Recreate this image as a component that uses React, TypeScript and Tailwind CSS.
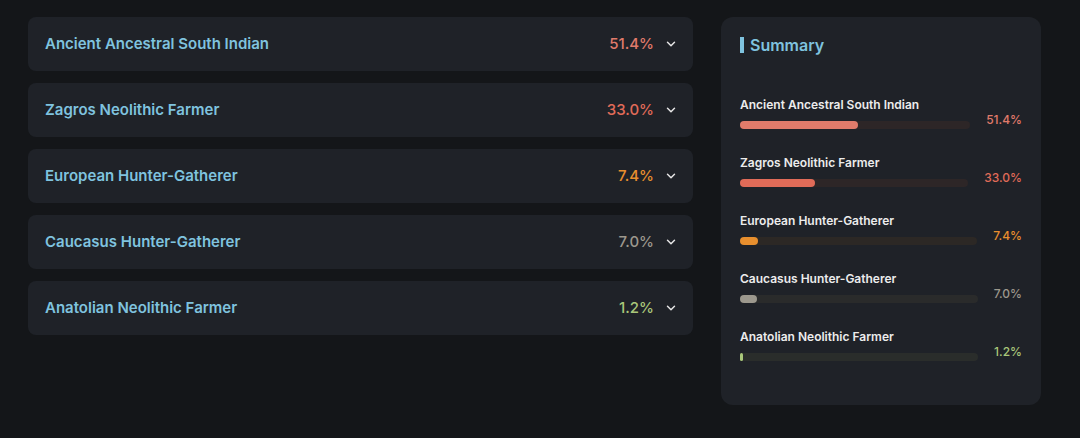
import { ChevronDown } from 'lucide-react';

interface Component {
  name: string;
  value: number;
  color: string;
  track: string;
}

const components: Component[] = [
  { name: 'Ancient Ancestral South Indian', value: 51.4, color: '#e07b6b', track: '#2d2627' },
  { name: 'Zagros Neolithic Farmer', value: 33.0, color: '#e06b58', track: '#2d2627' },
  { name: 'European Hunter-Gatherer', value: 7.4, color: '#e88f2e', track: '#2c2825' },
  { name: 'Caucasus Hunter-Gatherer', value: 7.0, color: '#9c988d', track: '#2a2b2b' },
  { name: 'Anatolian Neolithic Farmer', value: 1.2, color: '#a9c77a', track: '#2a2d2b' },
];

function ComponentRow({ item }: { item: Component }) {
  return (
    <div className="flex h-[54px] items-center justify-between rounded-lg bg-[#1f2228] pl-[17px] pr-[15px]">
      <span className="text-[15px] font-semibold text-[#7fc3df]">{item.name}</span>
      <div className="flex items-center gap-[10px]">
        <span className="text-[15px] font-medium" style={{ color: item.color }}>
          {item.value.toFixed(1)}%
        </span>
        <ChevronDown size={14} strokeWidth={2.5} className="text-[#e6e6e6]" />
      </div>
    </div>
  );
}

function SummaryItem({ item }: { item: Component }) {
  return (
    <div className="flex items-end gap-4">
      <div className="flex-1">
        <div className="text-[12px] font-semibold leading-4 text-[#ececec]">{item.name}</div>
        <div className="mt-2 h-2 w-full rounded-full" style={{ background: item.track }}>
          <div
            className="h-2 rounded-full"
            style={{ width: `${Math.max(item.value, 1.2)}%`, background: item.color }}
          />
        </div>
      </div>
      <span className="mb-[1px] text-[12px] font-medium leading-4" style={{ color: item.color }}>
        {item.value.toFixed(1)}%
      </span>
    </div>
  );
}

export default function App() {
  return (
    <div
      className="flex min-h-[438px] items-start gap-[28px] bg-[#141619] pl-[28px] pt-[17px]"
      style={{ fontFamily: 'Inter, "Open Sans", sans-serif' }}
    >
      {/* Expandable rows */}
      <div className="flex w-[665px] flex-col gap-[12px]">
        {components.map((c) => (
          <ComponentRow key={c.name} item={c} />
        ))}
      </div>

      {/* Summary panel */}
      <div className="w-[320px] rounded-xl bg-[#1f2228] px-[19px] pb-[44px] pt-[20px]">
        <h3 className="flex items-center gap-[6px] text-[16px] font-semibold leading-4 text-[#7fc3df]">
          <span className="h-4 w-1 bg-[#7fc3df]" />
          Summary
        </h3>
        <div className="mt-[44px] flex flex-col gap-[26px]">
          {components.map((c) => (
            <SummaryItem key={c.name} item={c} />
          ))}
        </div>
      </div>
    </div>
  );
}
